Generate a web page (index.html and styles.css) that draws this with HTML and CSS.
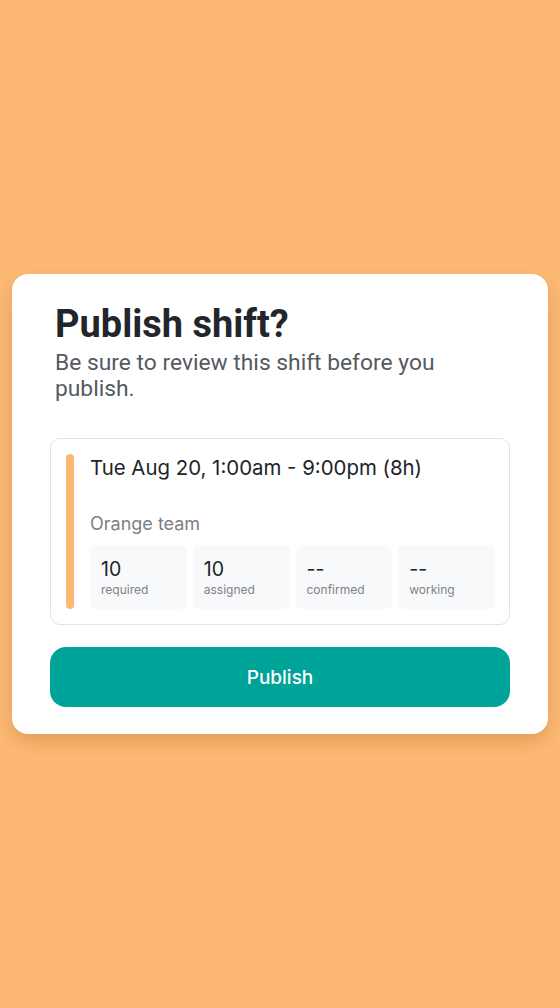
FILE: index.html
```html
<!DOCTYPE html>
<html>
<head>
<meta charset="utf-8">
<link rel="stylesheet" href="styles.css">
</head>
<body>
<div class="screen">
  <div class="dialog">
    <div class="header">
      <h1 class="title">Publish shift?</h1>
      <p class="subtitle">Be sure to review this shift before you publish.</p>
    </div>
    <div class="shift">
      <div class="accent"></div>
      <div class="shift-body">
        <div class="shift-time">Tue Aug 20, 1:00am - 9:00pm (8h)</div>
        <div class="team">Orange team</div>
        <div class="stats">
          <div class="stat"><div class="num">10</div><div class="label">required</div></div>
          <div class="stat"><div class="num">10</div><div class="label">assigned</div></div>
          <div class="stat"><div class="num">--</div><div class="label">confirmed</div></div>
          <div class="stat"><div class="num">--</div><div class="label">working</div></div>
        </div>
      </div>
    </div>
    <button class="publish">Publish</button>
  </div>
</div>
</body>
</html>
```
FILE: styles.css
```css
* { box-sizing: border-box; }
html, body { margin: 0; padding: 0; }
body { background: #fdb974; width: 560px; height: 1008px; }
.screen {
  height: 1008px;
  display: flex;
  flex-direction: column;
  padding: 274px 12px 0;
}
.dialog {
  background: #ffffff;
  border-radius: 16px;
  padding: 27px 38px 27px;
  box-shadow: 0 8px 18px rgba(160, 90, 20, 0.28);
}
.header { padding-left: 5px; }
.title {
  margin: 0;
  font-family: Roboto, "Liberation Sans", sans-serif;
  font-weight: 700;
  font-size: 38px;
  line-height: 46px;
  color: #22262b;
}
.subtitle {
  margin: 3px 0 0;
  font-family: Roboto, "Liberation Sans", sans-serif;
  font-size: 22.8px;
  line-height: 26px;
  color: #555a62;
  padding-right: 20px;
}
.shift {
  margin-top: 36px;
  border: 1px solid #e3e4e6;
  border-radius: 10px;
  padding: 15px 14px 15px 15px;
  display: flex;
  gap: 16px;
}
.accent {
  width: 8px;
  border-radius: 4px;
  background: #fdb974;
  flex: none;
}
.shift-body { flex: 1; font-family: Inter, "Liberation Sans", sans-serif; }
.shift-time {
  font-size: 20.4px;
  line-height: 28px;
  color: #222427;
}
.team {
  margin-top: 31px;
  font-size: 18px;
  line-height: 22px;
  color: #7c8086;
}
.stats {
  margin-top: 10px;
  display: grid;
  grid-template-columns: repeat(4, 1fr);
  gap: 6px;
}
.stat {
  background: #f8f9fa;
  border-radius: 6px;
  padding: 12px 11px 10px;
  height: 64px;
}
.num {
  font-size: 19.5px;
  line-height: 24px;
  color: #222427;
}
.label {
  margin-top: 1px;
  font-size: 12px;
  line-height: 16px;
  color: #7e8288;
}
.publish {
  display: block;
  width: 100%;
  margin-top: 22px;
  height: 60px;
  border: 0;
  border-radius: 16px;
  background: #00a398;
  color: #ffffff;
  font-family: Inter, "Liberation Sans", sans-serif;
  font-size: 19px;
  font-weight: 500;
}
```
